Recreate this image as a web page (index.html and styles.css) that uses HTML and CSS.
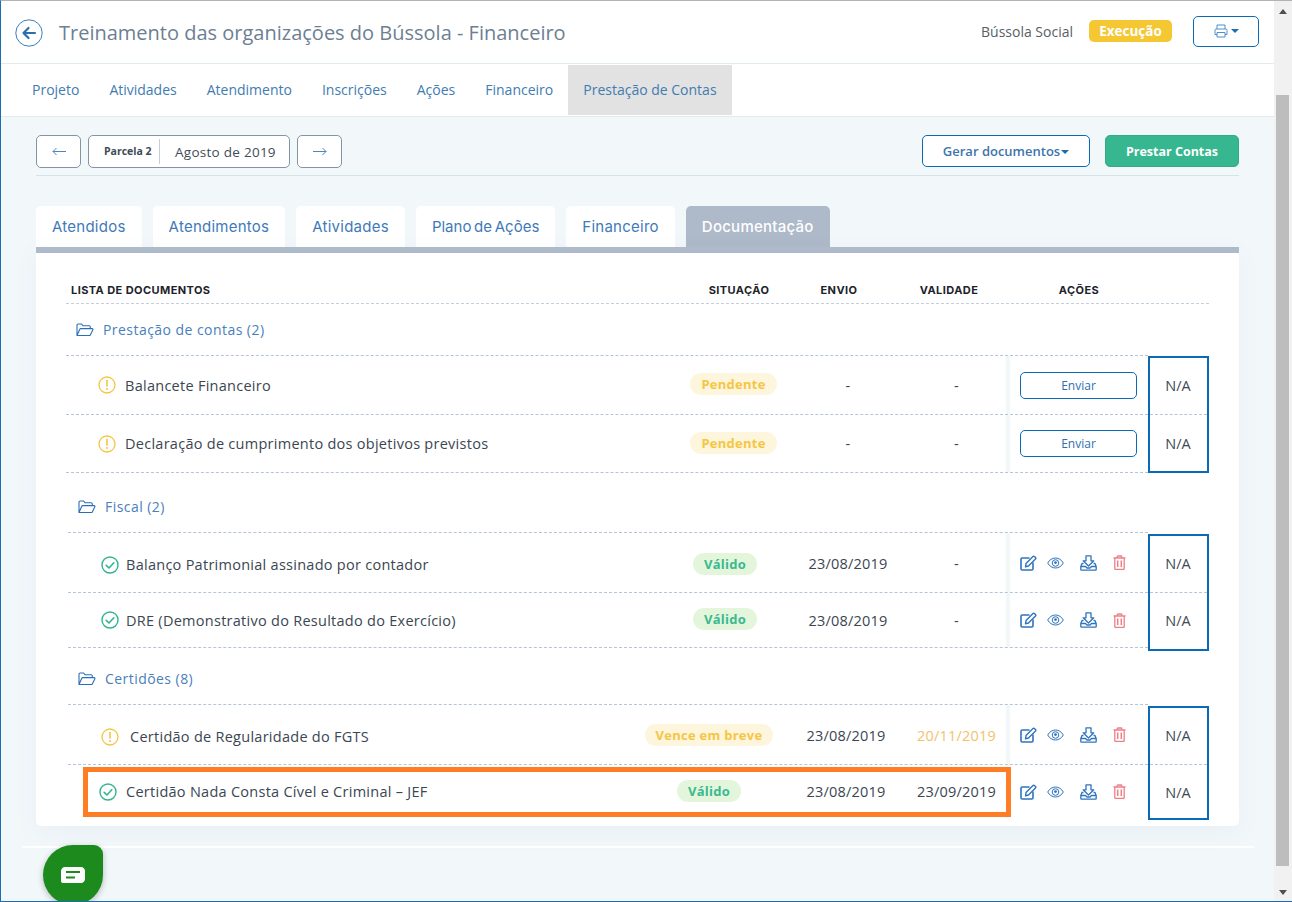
FILE: index.html
```html
<!DOCTYPE html>
<html lang="pt-BR">
<head>
<meta charset="utf-8">
<title>Treinamento das organizações do Bússola - Financeiro</title>
<link rel="stylesheet" href="styles.css">
</head>
<body>
<svg class="defs" width="0" height="0" aria-hidden="true">
  <symbol id="i-folder" viewBox="0 0 18 14"><path d="M1 12.500V2.200C1 1.500 1.500 1 2.200 1h3.400l1.500 1.800h6c.7 0 1.200.5 1.200 1.200v1.600M1 12.500 3.800 6.200c.2-.4.500-.6 1-.6h11.400c.6 0 1 .6.700 1.100l-2.600 5.200c-.2.400-.6.600-1 .6H1Z" fill="none" stroke="currentColor" stroke-width="1.100" stroke-linejoin="round"/></symbol>
  <symbol id="i-warn" viewBox="0 0 18 18"><circle cx="9" cy="9" r="8" fill="none" stroke="currentColor" stroke-width="1.300"/><path d="M9 4.500v5.600" stroke="currentColor" stroke-width="1.600" stroke-linecap="round"/><circle cx="9" cy="13" r="1" fill="currentColor"/></symbol>
  <symbol id="i-check" viewBox="0 0 18 18"><circle cx="9" cy="9" r="8" fill="none" stroke="currentColor" stroke-width="1.400"/><path d="M5.200 9.400 8 12l4.800-5.200" fill="none" stroke="currentColor" stroke-width="1.600" stroke-linecap="round" stroke-linejoin="round"/></symbol>
  <symbol id="i-edit" viewBox="0 0 17 16"><path d="M9.500 3H2.200C1.500 3 1 3.500 1 4.200v9.600c0 .7.500 1.200 1.200 1.200h9.600c.7 0 1.200-.5 1.200-1.200V7.500" fill="none" stroke="currentColor" stroke-width="1.600"/><path d="M6 8.500 13 1.500c.4-.4 1-.4 1.400 0l1.100 1.100c.4.400.4 1 0 1.400l-7 7-3 .8.500-2.800Z" fill="none" stroke="currentColor" stroke-width="1.400" stroke-linejoin="round"/></symbol>
  <symbol id="i-eye" viewBox="0 0 17 12"><path d="M.7 6C2.500 2.800 5.300 1 8.500 1s6 1.800 7.800 5c-1.800 3.200-4.600 5-7.800 5S2.500 9.200.7 6Z" fill="none" stroke="currentColor" stroke-width="1"/><circle cx="8.500" cy="6" r="3.300" fill="none" stroke="currentColor" stroke-width="1"/><circle cx="8.500" cy="5.600" r="1.400" fill="currentColor"/></symbol>
  <symbol id="i-down" viewBox="0 0 17 16"><path d="M6 .8h5v5h2.800L8.500 11 3.200 5.800H6v-5Z" fill="none" stroke="currentColor" stroke-width="1.300" stroke-linejoin="round"/><path d="M3.500 8.500H2L.8 11.500v3c0 .4.300.7.700.7h14c.4 0 .7-.3.700-.7v-3L15 8.500h-1.500M.8 11.500h4.700l1.500 1.500h3l1.500-1.500h4.700" fill="none" stroke="currentColor" stroke-width="1.300" stroke-linejoin="round"/></symbol>
  <symbol id="i-trash" viewBox="0 0 13 15"><path d="M.5 3h12M4.200 3V1.700c0-.4.300-.7.700-.7h3.200c.4 0 .7.300.7.700V3M1.800 3v10.500c0 .6.400 1 1 1h7.400c.6 0 1-.4 1-1V3" fill="none" stroke="currentColor" stroke-width="1.300"/><path d="M4.700 5.500v6.500M8.300 5.500v6.500" stroke="currentColor" stroke-width="1.500"/></symbol>
  <symbol id="i-left" viewBox="0 0 14 9"><path d="M14 4.500H1M4.500 1 1 4.500 4.500 8" fill="none" stroke="currentColor" stroke-width="1"/></symbol>
  <symbol id="i-right" viewBox="0 0 14 9"><path d="M0 4.500h13M9.500 1 13 4.500 9.500 8" fill="none" stroke="currentColor" stroke-width="1"/></symbol>
</svg>
<div class="window">
  <div class="main">
    <header class="topbar">
      <a class="back" href="#"><svg width="28" height="28" viewBox="0 0 28 28"><circle cx="14" cy="14" r="13.200" fill="none" stroke="#3a7fc1" stroke-width="1"/><path d="M20 14H9M13.500 9 8.500 14l5 5" fill="none" stroke="#2a6fb0" stroke-width="2.200" stroke-linecap="round" stroke-linejoin="round"/></svg></a>
      <h1 class="title">Treinamento das organizações do Bússola - Financeiro</h1>
      <span class="org">Bússola Social</span>
      <span class="state">Execução</span>
      <button class="print" type="button"><svg width="14" height="14" viewBox="0 0 14 14"><path d="M3 5V1h8v4M3 10.500H1V6.200C1 5.500 1.500 5 2.200 5h9.600c.7 0 1.200.5 1.200 1.200v4.300h-2M3 8.500h8V13H3V8.500Z" fill="none" stroke="#4d8fcb" stroke-width="1"/></svg><span class="caret"></span></button>
    </header>
    <nav class="nav">
      <a href="#">Projeto</a><a href="#">Atividades</a><a href="#">Atendimento</a><a href="#">Inscrições</a><a href="#">Ações</a><a href="#">Financeiro</a><a class="on" href="#">Prestação de Contas</a>
    </nav>
    <div class="content">
      <div class="toolbar">
        <button class="box-btn arrow" type="button"><svg width="14" height="9"><use href="#i-left"/></svg></button>
        <div class="box-btn period"><b>Parcela 2</b><span>Agosto de 2019</span></div>
        <button class="box-btn arrow" type="button"><svg width="14" height="9"><use href="#i-right"/></svg></button>
        <button class="gen" type="button">Gerar documentos<span class="caret"></span></button>
        <button class="send-all" type="button">Prestar Contas</button>
      </div>
      <div class="tabs">
        <a href="#">Atendidos</a><a href="#">Atendimentos</a><a href="#">Atividades</a><a href="#">Plano de Ações</a><a href="#">Financeiro</a><a class="on" href="#">Documentação</a>
      </div>
      <section class="card">
        <div class="thead"><span>LISTA DE DOCUMENTOS</span><span>SITUAÇÃO</span><span>ENVIO</span><span>VALIDADE</span><span>AÇÕES</span><span></span></div>

        <div class="group g1">
          <div class="gtitle"><svg class="folder"><use href="#i-folder"/></svg>Prestação de contas (2)</div>
          <div class="gbody">
            <div class="rows">
              <div class="row r-a">
                <div class="name"><svg class="st warn"><use href="#i-warn"/></svg>Balancete Financeiro</div>
                <div class="cell"><span class="pill p-warn">Pendente</span></div>
                <div class="cell">-</div><div class="cell">-</div>
                <div class="acts"><button class="enviar" type="button">Enviar</button></div>
              </div>
              <div class="row r-b">
                <div class="name"><svg class="st warn"><use href="#i-warn"/></svg>Declaração de cumprimento dos objetivos previstos</div>
                <div class="cell"><span class="pill p-warn">Pendente</span></div>
                <div class="cell">-</div><div class="cell">-</div>
                <div class="acts"><button class="enviar" type="button">Enviar</button></div>
              </div>
            </div>
            <div class="na"><div>N/A</div><div>N/A</div></div>
          </div>
        </div>

        <div class="group g2">
          <div class="gtitle"><svg class="folder"><use href="#i-folder"/></svg>Fiscal (2)</div>
          <div class="gbody">
            <div class="rows">
              <div class="row r-a">
                <div class="name"><svg class="st ok"><use href="#i-check"/></svg>Balanço Patrimonial assinado por contador</div>
                <div class="cell"><span class="pill p-ok">Válido</span></div>
                <div class="cell">23/08/2019</div><div class="cell">-</div>
                <div class="acts"><svg class="ic edit"><use href="#i-edit"/></svg><svg class="ic eye"><use href="#i-eye"/></svg><svg class="ic down"><use href="#i-down"/></svg><svg class="ic trash"><use href="#i-trash"/></svg></div>
              </div>
              <div class="row r-b">
                <div class="name"><svg class="st ok"><use href="#i-check"/></svg>DRE (Demonstrativo do Resultado do Exercício)</div>
                <div class="cell"><span class="pill p-ok">Válido</span></div>
                <div class="cell">23/08/2019</div><div class="cell">-</div>
                <div class="acts"><svg class="ic edit"><use href="#i-edit"/></svg><svg class="ic eye"><use href="#i-eye"/></svg><svg class="ic down"><use href="#i-down"/></svg><svg class="ic trash"><use href="#i-trash"/></svg></div>
              </div>
            </div>
            <div class="na"><div>N/A</div><div>N/A</div></div>
          </div>
        </div>

        <div class="group g3">
          <div class="gtitle"><svg class="folder"><use href="#i-folder"/></svg>Certidões (8)</div>
          <div class="gbody">
            <div class="rows">
              <div class="row r-a">
                <div class="name wide"><svg class="st warn"><use href="#i-warn"/></svg>Certidão de Regularidade do FGTS</div>
                <div class="cell"><span class="pill p-warn">Vence em breve</span></div>
                <div class="cell">23/08/2019</div><div class="cell soon">20/11/2019</div>
                <div class="acts"><svg class="ic edit"><use href="#i-edit"/></svg><svg class="ic eye"><use href="#i-eye"/></svg><svg class="ic down"><use href="#i-down"/></svg><svg class="ic trash"><use href="#i-trash"/></svg></div>
              </div>
              <div class="row r-b">
                <div class="name"><svg class="st ok"><use href="#i-check"/></svg>Certidão Nada Consta Cível e Criminal – JEF</div>
                <div class="cell"><span class="pill p-ok">Válido</span></div>
                <div class="cell">23/08/2019</div><div class="cell">23/09/2019</div>
                <div class="acts"><svg class="ic edit"><use href="#i-edit"/></svg><svg class="ic eye"><use href="#i-eye"/></svg><svg class="ic down"><use href="#i-down"/></svg><svg class="ic trash"><use href="#i-trash"/></svg></div>
                <div class="mark"></div>
              </div>
            </div>
            <div class="na"><div>N/A</div><div>N/A</div></div>
          </div>
        </div>
      </section>
      <div class="foot-line"></div>
    </div>
  </div>
  <div class="scrollbar"><span class="up"></span><span class="thumb"></span><span class="dn"></span></div>
  <a class="chat" href="#"><svg width="24" height="16" viewBox="0 0 24 16"><path d="M4 0h16c2.200 0 4 1.800 4 4v8c0 2.200-1.800 4-4 4H2c-1.100 0-2-.9-2-2V4c0-2.200 1.800-4 4-4Z" fill="#fff"/><path d="M5 5h14M5 10.500h9" stroke="#1d8a1d" stroke-width="1.800"/></svg></a>
</div>
</body>
</html>
```

FILE: styles.css
```css
* { box-sizing: border-box; }
html, body { margin: 0; padding: 0; height: 100%; overflow: hidden; }
body { font-family: "Open Sans", "Liberation Sans", sans-serif; color: #3b4652; }
a { text-decoration: none; color: inherit; }
button { font-family: inherit; cursor: pointer; }
.defs { position: absolute; }

.window { position: relative; display: flex; width: 1292px; height: 902px; overflow: hidden; border-top: 1px solid #aeb4b8; border-left: 1px solid #1a6db0; border-bottom: 1px solid #1a6db0; background: #f2f7fa; }
.main { flex: 1; min-width: 0; display: flex; flex-direction: column; }

.topbar { height: 63px; flex: none; display: flex; align-items: center; background: #fff; border-bottom: 1px solid #e0ecf0; padding: 0 15px 0 14px; }
.back { display: flex; margin-top: 1px; }
.title { margin: 0 0 0 16px; font-size: 20px; font-weight: 400; color: #6d7f93; flex: 1; }
.org { font-size: 14px; color: #585f66; margin-right: 16px; margin-top: -1px; }
.state { width: 83px; height: 22px; line-height: 22px; margin-right: 21px; margin-top: -2px; text-align: center; border-radius: 5px; background: #f4c733; color: #fff; font-size: 13.500px; font-weight: 700; }
.print { width: 66px; height: 31px; margin-top: -2px; display: flex; align-items: center; justify-content: center; gap: 3px; background: #fff; border: 1px solid #0a6ab5; border-radius: 5px; padding: 0; }
.caret { display: inline-block; width: 0; height: 0; border-left: 4px solid transparent; border-right: 4px solid transparent; border-top: 4px solid #1a6db0; }

.nav { height: 53px; flex: none; display: flex; padding: 1px 0 1px 16px; background: #fff; border-bottom: 1px solid #e0ecf0; }
.nav a { display: flex; align-items: center; padding: 0 15px 2px; font-size: 14px; color: #417cb0; }
.nav a.on { background: #e2e2e2; }

.content { flex: 1; padding: 18px 35px 0 35px; display: flex; flex-direction: column; }

.toolbar { display: flex; align-items: flex-start; gap: 7px; height: 41px; border-bottom: 1px solid #d4e4e8; }
.box-btn { height: 33px; background: #fff; border: 1px solid #8494a8; border-radius: 5px; color: #4a86c2; }
.arrow { width: 45px; padding: 0; display: flex; align-items: center; justify-content: center; }
.period { width: 202px; display: flex; align-items: center; color: #3f4b57; }
.period b { width: 71px; height: 25px; line-height: 25px; padding-left: 15px; border-right: 1px solid #c7ced6; font-size: 10.500px; font-weight: 700; white-space: nowrap; }
.period span { margin-left: 15px; font-size: 13.500px; letter-spacing: .02em; }
.gen { width: 168px; height: 32px; margin-left: auto; padding: 0; background: #fff; border: 1px solid #0a6ab5; border-radius: 5px; color: #3d74ae; font-size: 13px; font-weight: 600; }
.gen .caret { margin-left: 1px; vertical-align: 2px; }
.send-all { width: 134px; height: 32px; margin-left: 8px; padding: 0; background: #36b78f; border: 1px solid #34ab87; border-radius: 5px; color: #fff; font-size: 12.500px; font-weight: 700; }

.tabs { display: flex; gap: 11px; margin-top: 30px; height: 41px; }
.tabs a { display: flex; align-items: center; padding: 0 16px; background: #fff; border-radius: 5px 5px 0 0; font-family: Inter, "Open Sans", sans-serif; font-size: 15px; letter-spacing: .25px; white-space: pre; color: #3f7ab8; }
.tabs a:nth-child(4) { letter-spacing: 0; word-spacing: -1.500px; }
.tabs a.on { background: #aeb9c9; color: #fff; font-weight: 500; }

.card { flex: none; height: 579px; padding: 0 30px; background: #fff; border-top: 6px solid #aeb9c9; border-radius: 0 0 5px 5px; box-shadow: 0 6px 24px rgba(90,120,150,.06); }

.thead { display: grid; grid-template-columns: 1fr 100px 100px 120px 140px 60px; align-items: center; height: 51px; padding-top: 23px; border-bottom: 1px dashed #c3cfdc; font-family: Inter, "Open Sans", sans-serif; font-size: 11px; letter-spacing: .42px; font-weight: 700; color: #1d232a; text-align: center; }
.thead span:first-child { text-align: left; padding-left: 5px; }

.gtitle { display: flex; align-items: center; height: 20px; box-sizing: content-box; border-bottom: 1px dashed #b5c4d6; font-size: 14px; line-height: 20px; color: #4a80bb; letter-spacing: .45px; margin-right: 61px; }
.folder { width: 18px; height: 14px; color: #2a6fb5; margin-right: 9px; }
.g1 .gtitle { padding: 16px 0 15px 10px; }
.g2 .gtitle { padding: 24px 0 15px 10px; margin-left: 2px; }
.g3 .gtitle { padding: 18px 0 15px 10px; margin-left: 2px; }

.gbody { display: flex; align-items: flex-start; }
.rows { flex: 1; min-width: 0; }
.row { position: relative; display: grid; align-items: stretch; border-bottom: 1px dashed #b5c4d6; font-size: 14.500px; letter-spacing: .2px; }
.g1 .row { grid-template-columns: 1fr 111px 118px 99px 142px; }
.g2 .row { grid-template-columns: 1fr 128px 118px 99px 142px; margin-left: 2px; }
.g3 .row { grid-template-columns: 1fr 152px 122px 99px 142px; margin-left: 2px; }
.g1 .r-a { height: 59px; }
.g1 .r-b { height: 58px; }
.g2 .r-a { height: 60px; padding-top: 2px; }
.g2 .r-b { height: 55px; }
.g3 .r-a { height: 60px; padding-top: 2px; }
.g3 .r-b { height: 53px; border-bottom: 0; }

.name { display: flex; align-items: center; padding-left: 32px; white-space: nowrap; letter-spacing: .27px; color: #3b4652; }
.g2 .name, .g3 .r-a .name { padding-left: 33px; }
.g2 .r-a .name, .g3 .r-a .name { padding-top: 2px; }
.st { width: 18px; height: 18px; margin-right: 9px; flex: none; }
.g2 .st { margin-right: 7px; }
.g3 .r-a .st { margin-right: 11px; }
.g3 .r-b .name { padding-left: 31px; }
.warn { color: #f4c542; }
.ok { color: #35b48f; }
.cell { display: flex; align-items: center; justify-content: center; white-space: nowrap; color: #3b4652; }
.soon { color: #f3c26b; }
.pill { height: 22px; line-height: 22px; padding: 0 11px; margin-top: -2px; border-radius: 11px; font-size: 13px; font-weight: 700; letter-spacing: .26px; }
.g2 .r-a .pill { margin-top: 0; }
.p-warn { background: #fdf5dc; color: #f5c644; }
.p-ok { background: #e3f6dc; color: #3bb98f; }

.acts { display: flex; align-items: center; padding-left: 10px; border-left: 4px solid #f2f7fa; }
.g2 .r-a .acts, .g3 .r-a .acts { margin-top: -2px; }
.enviar { width: 117px; height: 27px; padding: 0; background: #fff; border: 1px solid #0a6ab5; border-radius: 5px; color: #2f6fae; font-size: 12px; }
.ic { flex: none; color: #2f74bd; }
.edit { width: 17px; height: 16px; margin-right: 10px; }
.eye { width: 17px; height: 12px; margin-right: 16px; }
.down { width: 17px; height: 16px; margin-right: 16px; }
.trash { width: 13px; height: 15px; color: #ee7f86; }

.mark { position: absolute; left: 15px; top: 2px; width: 928px; height: 50px; border: 5px solid #ff7d25; pointer-events: none; }

.na { flex: none; width: 61px; height: 117px; display: flex; flex-direction: column; border: 2px solid #0a6ab5; font-size: 14.500px; color: #3f4a55; }
.na div { flex: 1; display: flex; align-items: center; justify-content: center; padding-right: 1px; }
.na div:first-child { flex: none; height: 57px; padding-bottom: 2px; border-bottom: 1px dashed #b5c4d6; }
.g2 .na, .g3 .na { margin-top: 1px; }
.g2 .na div:last-child { padding-bottom: 2px; }
.g3 .na { height: 114px; }
.g3 .na div:last-child { padding-top: 1px; }

.foot-line { flex: none; height: 2px; margin: 20px -15px 0 -14px; background: #fff; }

.scrollbar { flex: none; width: 18px; position: relative; background: #f1f1f1; }
.thumb { position: absolute; left: 2px; right: 3px; top: 94px; height: 771px; background: #bdbdbd; }
.up, .dn { position: absolute; left: 5px; width: 0; height: 0; border-left: 4px solid transparent; border-right: 4px solid transparent; }
.up { top: 8px; border-bottom: 5px solid #505050; }
.dn { bottom: 6px; border-top: 5px solid #505050; }

.chat { position: absolute; left: 42px; top: 844px; width: 60px; height: 60px; display: flex; align-items: center; justify-content: center; background: #1d8a1d; border-radius: 50% 9px 50% 50%; box-shadow: 0 2px 6px rgba(0,0,0,.25); }
```
